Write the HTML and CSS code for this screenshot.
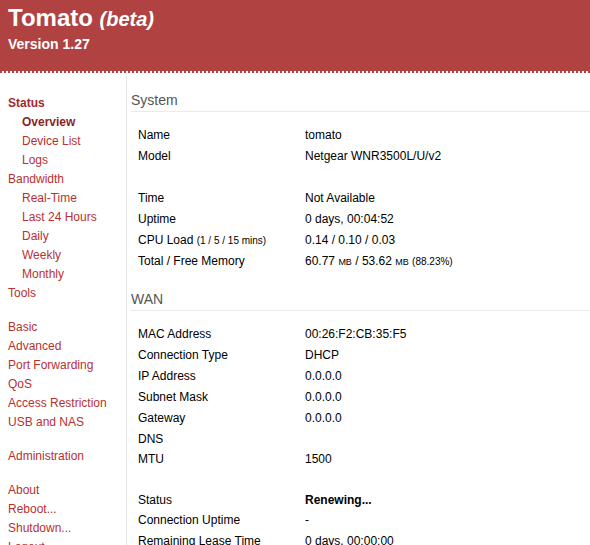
FILE: index.html
```html
<!DOCTYPE html>
<html lang="en">
<head>
    <meta charset="UTF-8">
    <title>[Tomato] Status: Overview</title>
    <link rel="stylesheet" href="styles.css">
</head>
<body>
    <div class="header">
        <div class="title">Tomato <i>(beta)</i></div>
        <div class="version">Version 1.27</div>
    </div>
    <div class="strip"></div>
    <div class="layout">
        <div class="navi">
            <a class="top active">Status</a>
            <a class="sub current">Overview</a>
            <a class="sub">Device List</a>
            <a class="sub">Logs</a>
            <a class="top">Bandwidth</a>
            <a class="sub">Real-Time</a>
            <a class="sub">Last 24 Hours</a>
            <a class="sub">Daily</a>
            <a class="sub">Weekly</a>
            <a class="sub">Monthly</a>
            <a class="top">Tools</a>
            <a class="top gap">Basic</a>
            <a class="top">Advanced</a>
            <a class="top">Port Forwarding</a>
            <a class="top">QoS</a>
            <a class="top">Access Restriction</a>
            <a class="top">USB and NAS</a>
            <a class="top gap">Administration</a>
            <a class="top gap">About</a>
            <a class="top">Reboot...</a>
            <a class="top">Shutdown...</a>
            <a class="top">Logout</a>
        </div>
        <div class="content">
            <div class="section-title">System</div>
            <div class="section">
                <div class="row"><span class="label">Name</span><span class="value">tomato</span></div>
                <div class="row"><span class="label">Model</span><span class="value">Netgear WNR3500L/U/v2</span></div>
                <div class="row"></div>
                <div class="row"><span class="label">Time</span><span class="value">Not Available</span></div>
                <div class="row"><span class="label">Uptime</span><span class="value">0 days, 00:04:52</span></div>
                <div class="row"><span class="label">CPU Load <small>(1 / 5 / 15 mins)</small></span><span class="value">0.14 / 0.10 / 0.03</span></div>
                <div class="row"><span class="label">Total / Free Memory</span><span class="value">60.77 <small class="unit">MB</small> / 53.62 <small class="unit">MB</small> <small>(88.23%)</small></span></div>
            </div>

            <div class="section-title">WAN</div>
            <div class="section">
                <div class="row"><span class="label">MAC Address</span><span class="value">00:26:F2:CB:35:F5</span></div>
                <div class="row"><span class="label">Connection Type</span><span class="value">DHCP</span></div>
                <div class="row"><span class="label">IP Address</span><span class="value">0.0.0.0</span></div>
                <div class="row"><span class="label">Subnet Mask</span><span class="value">0.0.0.0</span></div>
                <div class="row"><span class="label">Gateway</span><span class="value">0.0.0.0</span></div>
                <div class="row short"><span class="label">DNS</span><span class="value"></span></div>
                <div class="row"><span class="label">MTU</span><span class="value">1500</span></div>
                <div class="row short"></div>
                <div class="row short"><span class="label">Status</span><span class="value"><b>Renewing...</b></span></div>
                <div class="row"><span class="label">Connection Uptime</span><span class="value">-</span></div>
                <div class="row"><span class="label">Remaining Lease Time</span><span class="value">0 days, 00:00:00</span></div>
            </div>
        </div>
    </div>
</body>
</html>
```

FILE: styles.css
```css
body {
    margin: 0;
    font-family: "Liberation Sans", Arial, sans-serif;
    font-size: 12px;
    color: #000;
    background: #fff;
    overflow: hidden;
}
.header {
    background-color: #b04242;
    color: #fff;
    height: 67px;
    padding: 4px 0 0 8px;
}
.title {
    font-size: 24px;
    font-weight: bold;
    line-height: 28px;
}
.title i {
    font-size: 20px;
}
.version {
    font-size: 14px;
    font-weight: bold;
    line-height: 17px;
    margin-top: 3px;
}
.strip {
    height: 2px;
    background: repeating-linear-gradient(90deg, #b04242 0, #b04242 2px, #fff 2px, #fff 4px);
}
.layout {
    display: flex;
}
.navi {
    width: 126px;
    flex-shrink: 0;
    border-right: 1px solid #e6e6e6;
    padding-top: 21px;
    min-height: 480px;
}
.navi a {
    display: block;
    line-height: 19px;
    color: #b8302f;
    white-space: nowrap;
}
.navi .top {
    padding-left: 8px;
}
.navi .sub {
    padding-left: 22px;
}
.navi .gap {
    margin-top: 15px;
}
.navi .active {
    font-weight: bold;
    color: #a32a2a;
}
.navi .current {
    font-weight: bold;
    color: #8a1f1f;
}
.content {
    flex-grow: 1;
    padding-left: 4px;
}
.section-title {
    font-size: 14px;
    line-height: 18px;
    color: #555;
    margin-top: 18px;
    padding-bottom: 2px;
    border-bottom: 1px solid #eaeaea;
}
.section {
    padding: 13px 0 0 7px;
    margin-bottom: 4px;
}
.row {
    display: flex;
    height: 21px;
    line-height: 21px;
}
.row.short {
    height: 20px;
    line-height: 20px;
}
.label {
    width: 167px;
    flex-shrink: 0;
}
.value {
    white-space: nowrap;
}
small {
    font-size: 10px;
}
small.unit {
    font-size: 9px;
}
```
